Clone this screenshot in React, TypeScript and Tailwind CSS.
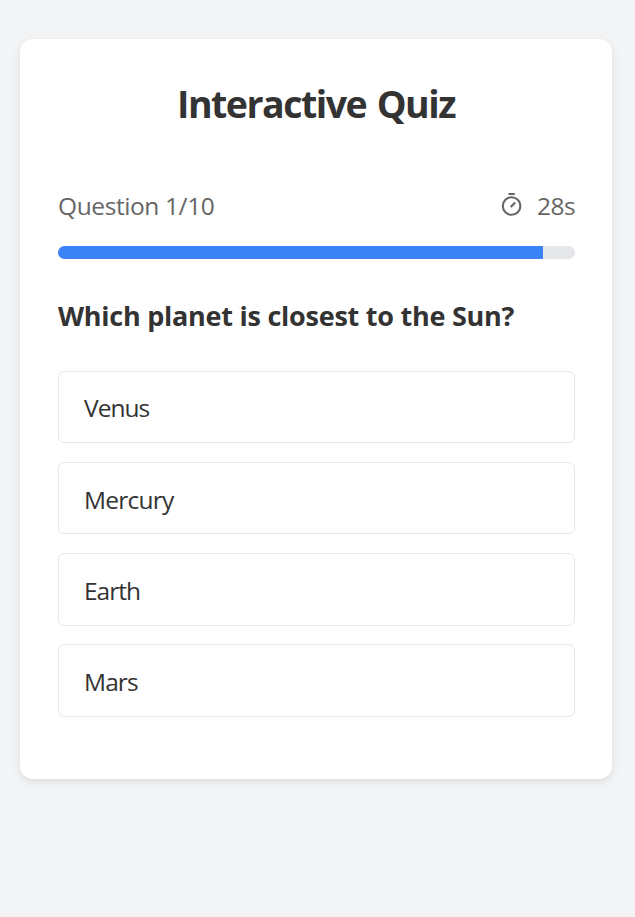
const options = [
  { label: "Venus", box: "h-[72px] mb-[19px] pt-[2px]", text: "tracking-[-0.95px]" },
  { label: "Mercury", box: "h-[72px] mb-[19px] pt-[4px]", text: "tracking-[-0.75px]" },
  { label: "Earth", box: "h-[73px] mb-[18px] pt-[2px]", text: "tracking-[-1px]" },
  { label: "Mars", box: "h-[73px] pt-[2px]", text: "tracking-[-0.9px]" },
];

function TimerIcon() {
  return (
    <svg width="24" height="28" viewBox="0 0 24 28" fill="none" stroke="#666666" strokeWidth="2.1" aria-hidden="true">
      <path d="M8.4 2h6.4" />
      <circle cx="11.6" cy="14" r="8.8" />
      <path d="M10.7 15.1l4.5-4.7" />
    </svg>
  );
}

export default function App() {
  return (
    <div className="min-h-screen bg-[#f3f4f6] pl-5 pt-[39px] font-['Segoe_UI','Open_Sans','Noto_Sans',sans-serif] text-[#333333]">
      <main className="flex h-[740px] w-[592px] flex-col rounded-[13px] bg-white pl-[38px] pr-[37px] pt-[38px] shadow-[0_3px_9px_rgba(0,0,0,0.1)]">
        <h1 className="h-[54px] whitespace-nowrap pr-px text-center text-[37.5px] font-bold leading-[54px] tracking-[-1.5px] [word-spacing:2.4px]">
          <span>Interactive Quiz</span>
        </h1>
        <div className="mt-[56px] flex h-[38px] items-center justify-between whitespace-nowrap text-[24.5px] leading-[38px] text-[#666666]">
          <span className="tracking-[-0.4px]">Question 1/10</span>
          <div className="flex items-center gap-[13px]">
            <TimerIcon />
            <span className="tracking-[-0.6px]">28s</span>
          </div>
        </div>
        <div className="mt-[21px] h-[13px] shrink-0 overflow-hidden rounded-full bg-[#e5e7eb]">
          <div className="h-full w-[485px] bg-[#3b82f6]" />
        </div>
        <h2 className="mt-[38px] h-[38px] whitespace-nowrap text-[27px] font-bold leading-[38px] tracking-[-0.25px]">
          <span>Which planet is closest to the Sun?</span>
        </h2>
        <div className="mt-[36px] flex flex-col">
          {options.map((o) => (
            <button key={o.label} className={`flex shrink-0 items-center rounded-md border border-[#e5e7eb] bg-white pl-[25px] text-left text-[24.5px] leading-[38px] ${o.box}`}>
              <span className={o.text}>{o.label}</span>
            </button>
          ))}
        </div>
      </main>
    </div>
  );
}
